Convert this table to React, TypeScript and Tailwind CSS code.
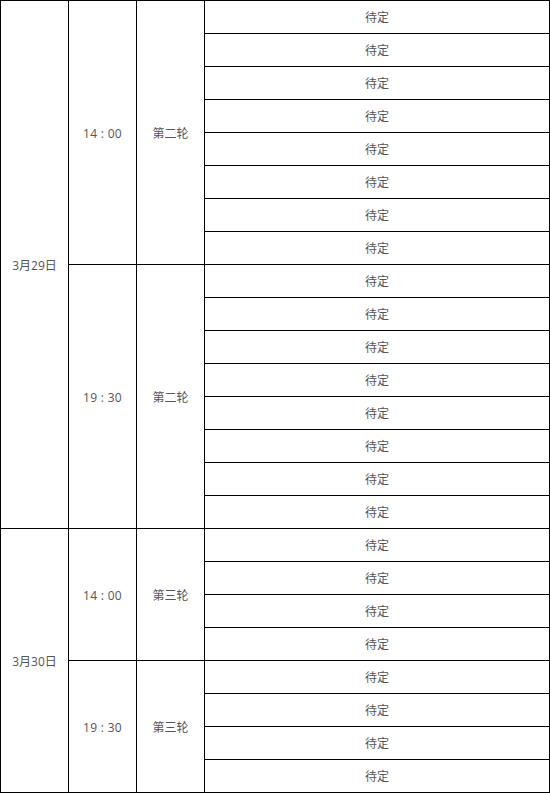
import React from "react";

type Block = { time: string; round: string; n: number };
type Day = { date: string; blocks: Block[] };

const days: Day[] = [
  { date: "3月29日", blocks: [ { time: "14 : 00", round: "第二轮", n: 8 }, { time: "19 : 30", round: "第二轮", n: 8 } ] },
  { date: "3月30日", blocks: [ { time: "14 : 00", round: "第三轮", n: 4 }, { time: "19 : 30", round: "第三轮", n: 4 } ] },
];

const cell = "border border-black text-center align-middle px-0 pb-0 pt-[2px]";

export default function App() {
  const rows: React.ReactNode[] = [];
  days.forEach((d, di) => {
    const total = d.blocks.reduce((a, b) => a + b.n, 0);
    d.blocks.forEach((b, bi) => {
      for (let i = 0; i < b.n; i++) {
        rows.push(
          <tr key={`${di}-${bi}-${i}`} className="h-[33px]">
            {bi === 0 && i === 0 && (
              <td rowSpan={total} className={`${cell} w-[68px]`}>{d.date}</td>
            )}
            {i === 0 && (
              <td rowSpan={b.n} className={`${cell} w-[68px] tracking-[0.3px]`}>{b.time}</td>
            )}
            {i === 0 && (
              <td rowSpan={b.n} className={`${cell} w-[68px]`}>{b.round}</td>
            )}
            <td className={cell}>待定</td>
          </tr>
        );
      }
    });
  });
  return (
    <div className="w-[550px] bg-white">
      <table
        className="w-[550px] border-collapse table-fixed text-[12px] leading-[16px] text-[#555]"
        style={{ fontFamily: '"Open Sans", "Noto Sans CJK SC", sans-serif' }}
      >
        <colgroup>
          <col className="w-[68px]" />
          <col className="w-[68px]" />
          <col className="w-[68px]" />
          <col />
        </colgroup>
        <tbody>{rows}</tbody>
      </table>
    </div>
  );
}
